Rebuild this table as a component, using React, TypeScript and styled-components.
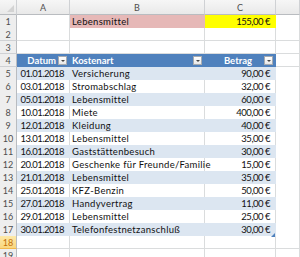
import React, { FC } from 'react';
import styled, { createGlobalStyle } from 'styled-components';

const GlobalStyle = createGlobalStyle`
    html, body {
        margin: 0;
        padding: 0;
        background: #ffffff;
        overflow: hidden;
    }
`;

const Colors = {
    grid: '#dadcdd',
    headBg: '#eeeeee',
    headLine: '#cfd1d4',
    headText: '#4d4d4d',
    band: '#dce6f1',
    bandLine: '#b8cce4',
    tableHead: '#4f81bd',
    pink: '#e6b8b7',
    yellow: '#ffff00',
};

const COLS = '17px 53px 135px 71px 1fr';

const Sheet = styled.div`
    position: relative;
    width: 300px;
    height: 257px;
    overflow: hidden;
    display: flex;
    flex-direction: column;
    font-family: Lato, 'Open Sans', sans-serif;
    font-size: 9.5px;
    color: #111;
`;

const Row = styled.div<{ $h?: number }>`
    display: grid;
    grid-template-columns: ${COLS};
    height: ${p => p.$h ?? 13}px;
    flex: none;
`;

const ColHead = styled.div`
    box-sizing: border-box;
    background: linear-gradient(#f6f6f6, #e9e9e9);
    border-right: 1px solid ${Colors.headLine};
    border-bottom: 1px solid #b9bcc0;
    color: ${Colors.headText};
    font-size: 9px;
    display: flex;
    align-items: center;
    justify-content: center;
`;

const Corner = styled(ColHead)`
    position: relative;
    &::after {
        content: '';
        position: absolute;
        right: 2px;
        bottom: 2px;
        border-left: 7px solid transparent;
        border-bottom: 7px solid #d3d3d3;
    }
`;

const RowHead = styled.div<{ $active?: boolean }>`
    box-sizing: border-box;
    background: ${p => (p.$active ? 'linear-gradient(#fde9a8, #f9d77e)' : Colors.headBg)};
    border-right: 1px solid #b9bcc0;
    border-bottom: 1px solid ${p => (p.$active ? '#f2b84c' : Colors.headLine)};
    color: ${p => (p.$active ? '#c2700a' : Colors.headText)};
    font-size: 9px;
    display: flex;
    align-items: center;
    justify-content: center;
`;

const Cell = styled.div<{ $bg?: string; $num?: boolean; $line?: string }>`
    box-sizing: border-box;
    position: relative;
    z-index: ${p => (p.$num ? 0 : 1)};
    background: ${p => p.$bg ?? '#fff'};
    border-right: 1px solid ${p => (p.$bg ? p.$bg : Colors.grid)};
    border-bottom: 1px solid ${p => p.$line ?? Colors.grid};
    display: flex;
    align-items: center;
    justify-content: ${p => (p.$num ? 'flex-end' : 'flex-start')};
    padding: 1px ${p => (p.$num ? 5 : 2)}px 0 2px;
    letter-spacing: ${p => (p.$num ? -0.5 : 0.3)}px;
    white-space: nowrap;
    overflow: visible;
    line-height: 12px;
`;

const HeadCell = styled.div<{ $gap: number; $right?: boolean }>`
    box-sizing: border-box;
    background: ${Colors.tableHead};
    border-bottom: 1px solid ${Colors.tableHead};
    color: #fff;
    font-weight: bold;
    display: flex;
    align-items: center;
    justify-content: ${p => (p.$right ? 'flex-end' : 'flex-start')};
    gap: ${p => p.$gap}px;
    padding: 1px 3px 0 2px;
`;

const Spacer = styled.span`
    flex: 1;
`;

const DropBtn = styled.span`
    box-sizing: border-box;
    width: 9px;
    height: 9px;
    flex: none;
    background: linear-gradient(#ffffff, #e8e8e8);
    border: 1px solid #a7abb0;
    display: flex;
    align-items: center;
    justify-content: center;
    &::after {
        content: '';
        border-left: 2px solid transparent;
        border-right: 2px solid transparent;
        border-top: 2px solid #444;
    }
`;

const Handle = styled.div`
    position: absolute;
    z-index: 2;
    left: 271px;
    top: 233px;
    border-left: 4px solid transparent;
    border-bottom: 4px solid #4f81bd;
`;

const rows: [string, string, string][] = [
    ['01.01.2018', 'Versicherung', '90,00 €'],
    ['03.01.2018', 'Stromabschlag', '32,00 €'],
    ['05.01.2018', 'Lebensmittel', '60,00 €'],
    ['10.01.2018', 'Miete', '400,00 €'],
    ['12.01.2018', 'Kleidung', '40,00 €'],
    ['13.01.2018', 'Lebensmittel', '35,00 €'],
    ['16.01.2018', 'Gaststättenbesuch', '30,00 €'],
    ['20.01.2018', 'Geschenke für Freunde/Familie', '15,00 €'],
    ['21.01.2018', 'Lebensmittel', '35,00 €'],
    ['25.01.2018', 'KFZ-Benzin', '50,00 €'],
    ['27.01.2018', 'Handyvertrag', '11,00 €'],
    ['29.01.2018', 'Lebensmittel', '25,00 €'],
    ['30.01.2018', 'Telefonfestnetzanschluß', '30,00 €'],
];

const EmptyRow: FC<{ n: number; active?: boolean }> = ({ n, active }) => (
    <Row>
        <RowHead $active={active}>{n}</RowHead>
        <Cell />
        <Cell />
        <Cell />
        <Cell />
    </Row>
);

const App: FC = () => {
    return (
        <>
            <GlobalStyle />
            <Sheet>
                <Row $h={15}>
                    <Corner />
                    <ColHead>A</ColHead>
                    <ColHead>B</ColHead>
                    <ColHead>C</ColHead>
                    <ColHead />
                </Row>
                <Row>
                    <RowHead>1</RowHead>
                    <Cell />
                    <Cell $bg={Colors.pink}>Lebensmittel</Cell>
                    <Cell $bg={Colors.yellow} $num>155,00 €</Cell>
                    <Cell />
                </Row>
                <EmptyRow n={2} />
                <EmptyRow n={3} />
                <Row>
                    <RowHead>4</RowHead>
                    <HeadCell $gap={2} $right>
                        <span>Datum</span>
                        <DropBtn />
                    </HeadCell>
                    <HeadCell $gap={0}>
                        <span>Kostenart</span>
                        <Spacer />
                        <DropBtn />
                    </HeadCell>
                    <HeadCell $gap={12} $right>
                        <span>Betrag</span>
                        <DropBtn />
                    </HeadCell>
                    <Cell />
                </Row>
                {rows.map(([d, k, b], i) => {
                    const band = i % 2 === 0 ? Colors.band : undefined;
                    return (
                        <Row key={d}>
                            <RowHead>{i + 5}</RowHead>
                            <Cell $bg={band} $num $line={Colors.bandLine}>{d}</Cell>
                            <Cell $bg={band} $line={Colors.bandLine}>{k}</Cell>
                            <Cell $bg={band} $num $line={Colors.bandLine}>{b}</Cell>
                            <Cell />
                        </Row>
                    );
                })}
                <EmptyRow n={18} active />
                <EmptyRow n={19} />
                <Handle />
            </Sheet>
        </>
    );
};

export default App;
